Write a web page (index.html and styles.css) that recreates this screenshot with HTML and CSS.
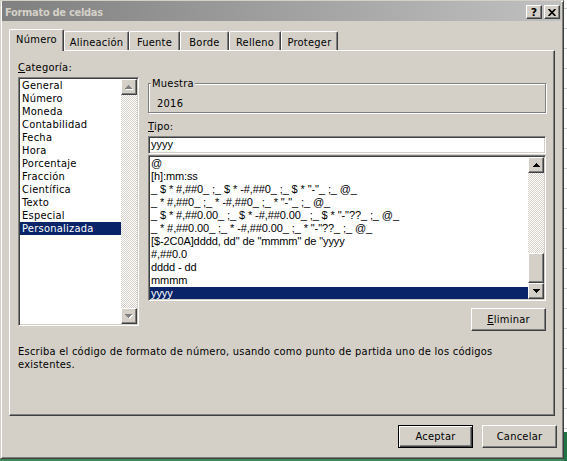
FILE: index.html
```html
<!DOCTYPE html>
<html lang="es">
<head>
<meta charset="utf-8">
<title>Formato de celdas</title>
<link rel="stylesheet" href="styles.css">
</head>
<body>
<div class="window">
  <div class="titlebar">
    <span class="title">Formato de celdas</span>
    <div class="title-buttons">
      <div class="tbtn raised">?</div>
      <div class="tbtn raised"><svg width="8" height="7" viewBox="0 0 8 7"><path d="M0.6 0 L7.4 7 M7.4 0 L0.6 7" stroke="#000" stroke-width="1.7" fill="none"/></svg></div>
    </div>
  </div>
  <div class="main">
    <div class="tabs">
      <div class="tab active tab-numero">Número</div>
      <div class="tab tab-alineacion">Alineación</div>
      <div class="tab tab-fuente">Fuente</div>
      <div class="tab tab-borde">Borde</div>
      <div class="tab tab-relleno">Relleno</div>
      <div class="tab tab-proteger">Proteger</div>
    </div>
    <div class="panel">
      <div class="columns">
        <div class="col-left">
          <div class="label"><u>C</u>ategoría:</div>
          <div class="listbox cat-list">
            <div class="items">
              <div class="item">General</div>
              <div class="item">Número</div>
              <div class="item">Moneda</div>
              <div class="item">Contabilidad</div>
              <div class="item">Fecha</div>
              <div class="item">Hora</div>
              <div class="item">Porcentaje</div>
              <div class="item">Fracción</div>
              <div class="item">Científica</div>
              <div class="item">Texto</div>
              <div class="item">Especial</div>
              <div class="item selected">Personalizada</div>
            </div>
            <div class="vscroll">
              <div class="sbtn raised"><svg width="8" height="5" viewBox="0 0 8 5"><path transform="translate(1 1)" fill="#fff" d="M3 0h1v1h1v1h1v1h1v1H0V3h1V2h1V1h1z"/><path fill="#808080" d="M3 0h1v1h1v1h1v1h1v1H0V3h1V2h1V1h1z"/></svg></div>
              <div class="track"></div>
              <div class="sbtn raised"><svg width="8" height="5" viewBox="0 0 8 5"><path transform="translate(1 1)" fill="#fff" d="M0 0h7v1H6v1H5v1H4v1H3V3H2V2H1V1H0z"/><path fill="#808080" d="M0 0h7v1H6v1H5v1H4v1H3V3H2V2H1V1H0z"/></svg></div>
            </div>
          </div>
        </div>
        <div class="col-right">
          <div class="group">
            <div class="legend">Muestra</div>
            <div class="sample">2016</div>
          </div>
          <div class="label tipo-label"><u>T</u>ipo:</div>
          <div class="field">yyyy</div>
          <div class="listbox fmt-list">
            <div class="items">
              <div class="item">@</div>
              <div class="item">[h]:mm:ss</div>
              <div class="item">_ $ * #,##0_ ;_ $ * -#,##0_ ;_ $ * "-"_ ;_ @_</div>
              <div class="item">_ * #,##0_ ;_ * -#,##0_ ;_ * "-"_ ;_ @_</div>
              <div class="item">_ $ * #,##0.00_ ;_ $ * -#,##0.00_ ;_ $ * "-"??_ ;_ @_</div>
              <div class="item">_ * #,##0.00_ ;_ * -#,##0.00_ ;_ * "-"??_ ;_ @_</div>
              <div class="item">[$-2C0A]dddd, dd" de "mmmm" de "yyyy</div>
              <div class="item">#,##0.0</div>
              <div class="item">dddd - dd</div>
              <div class="item">mmmm</div>
              <div class="item selected">yyyy</div>
            </div>
            <div class="vscroll">
              <div class="sbtn raised"><svg width="7" height="4" viewBox="0 0 7 4"><path fill="#000" d="M3 0h1v1h1v1h1v1h1v1H0V3h1V2h1V1h1z"/></svg></div>
              <div class="track"></div>
              <div class="thumb raised"></div>
              <div class="sbtn raised"><svg width="7" height="4" viewBox="0 0 7 4"><path fill="#000" d="M0 0h7v1H6v1H5v1H4v1H3V3H2V2H1V1H0z"/></svg></div>
            </div>
          </div>
          <div class="actions-right">
            <button class="btn" type="button"><u>E</u>liminar</button>
          </div>
        </div>
      </div>
      <p class="desc">Escriba el código de formato de número, usando como punto de partida uno de los códigos<br>existentes.</p>
    </div>
    <div class="footer">
      <button class="btn default" type="button">Aceptar</button>
      <button class="btn" type="button">Cancelar</button>
    </div>
  </div>
</div>
</body>
</html>
```

FILE: styles.css
```css
* { box-sizing: border-box; }
html, body { margin: 0; padding: 0; }
body {
  width: 567px;
  height: 461px;
  overflow: hidden;
  font-family: "DejaVu Sans Condensed", "DejaVu Sans", sans-serif;
  font-stretch: condensed;
  font-size: 11px;
  line-height: 13px;
  letter-spacing: 0.25px;
  color: #000;
  background:
    linear-gradient(#217346, #217346) right bottom / 3px 29px no-repeat,
    linear-gradient(#3d8a5c, #3d8a5c) left bottom / 100% 2px no-repeat,
    repeating-linear-gradient(to bottom, #fff 0 8px, #d0d0d0 8px 9px, #fff 9px 20px);
}

.window {
  width: 564px;
  height: 459px;
  background: #d4d0c8;
  border: 1px solid;
  border-color: #d4d0c8 #404040 #404040 #d4d0c8;
  box-shadow: inset 1px 1px #fff, inset -1px -1px #808080;
  padding: 0 2px 0 1px;
}

.raised {
  background: #d4d0c8;
  border: 1px solid;
  border-color: #fff #404040 #404040 #fff;
  box-shadow: inset -1px -1px #808080;
}

/* title bar */
.titlebar {
  height: 20px;
  display: flex;
  align-items: flex-end;
  justify-content: space-between;
  padding: 0 1px 2px 3px;
  background: linear-gradient(to right, #808080, #c0c0c0);
}
.title {
  font-weight: bold;
  color: #d4d0c8;
  line-height: 13px;
  letter-spacing: -0.3px;
}
.title-buttons { display: flex; gap: 2px; }
.tbtn {
  width: 16px;
  height: 14px;
  display: flex;
  align-items: center;
  justify-content: center;
  font-family: "DejaVu Sans", sans-serif;
  font-stretch: normal;
  font-weight: bold;
  font-size: 11px;
  line-height: 1;
  letter-spacing: 0;
}

/* main area */
.main { padding: 8px 0 0 7px; }

.tabs {
  display: flex;
  align-items: flex-end;
  height: 21px;
}
.tab {
  height: 19px;
  padding-top: 4px;
  text-align: center;
  border: 1px solid;
  border-bottom: 0;
  border-color: #fff #404040 #404040 #fff;
  border-radius: 2px 2px 0 0;
  box-shadow: inset -1px 0 #808080;
  background: #d4d0c8;
}
.tab.active {
  height: 22px;
  padding-top: 3px;
  margin-bottom: -1px;
  position: relative;
  z-index: 1;
}
.tab-numero { width: 55px; }
.tab-alineacion { width: 65px; }
.tab-fuente { width: 51px; }
.tab-borde { width: 49px; }
.tab-relleno { width: 52px; }
.tab-proteger { width: 57px; }

.panel {
  width: 546px;
  height: 366px;
  border: 1px solid;
  border-color: #fff #404040 #404040 #fff;
  box-shadow: inset -1px -1px #808080;
  padding: 10px 8px 0 8px;
}

.columns {
  display: grid;
  grid-template-columns: 121px 398px;
  column-gap: 9px;
  align-items: start;
}

.label { line-height: 13px; }

.listbox {
  display: flex;
  background: #fff;
  border: 1px solid;
  border-color: #808080 #fff #fff #808080;
  box-shadow: inset 1px 1px #404040, inset -1px -1px #d4d0c8;
  padding: 1px;
}
.items {
  flex: 1;
  overflow: hidden;
  min-width: 0;
}
.item { line-height: 13px; white-space: pre; }
.item.selected { background: #0a246a; color: #fff; }

.cat-list { margin-top: 3px; height: 249px; }
.cat-list .item { padding-left: 2px; }

.vscroll {
  width: 16px;
  flex: none;
  display: flex;
  flex-direction: column;
}
.sbtn {
  height: 16px;
  flex: none;
  display: flex;
  align-items: center;
  justify-content: center;
}
.track {
  flex: 1;
  background: repeating-conic-gradient(#fff 0 25%, #d4d0c8 0 50%) 0 0 / 2px 2px;
}
.thumb { height: 30px; flex: none; }

/* right column */
.group {
  height: 30px;
  margin-top: 22px;
  border: 1px solid #808080;
  box-shadow: inset 1px 1px #fff, 1px 1px #fff;
}
.legend {
  width: fit-content;
  margin: -7px 0 0 2px;
  padding: 0 1px;
  background: #d4d0c8;
  line-height: 13px;
}
.sample {
  margin-top: 7px;
  padding-left: 8px;
  line-height: 13px;
}
.tipo-label { margin-top: 7px; }

.field {
  height: 18px;
  margin-top: 3px;
  background: #fff;
  border: 1px solid;
  border-color: #808080 #fff #fff #808080;
  box-shadow: inset 1px 1px #404040, inset -1px -1px #d4d0c8;
  padding: 1px 2px 0 2px;
  font-family: "Liberation Sans", Arial, sans-serif;
  font-stretch: normal;
  letter-spacing: 0;
  line-height: 12px;
}

.fmt-list { margin-top: 1px; height: 146px; }
.fmt-list .items {
  font-family: "Liberation Sans", Arial, sans-serif;
  font-stretch: normal;
  letter-spacing: -0.1px;
}
.fmt-list .item { padding-left: 1px; }

.actions-right {
  display: flex;
  justify-content: flex-end;
  margin-top: 7px;
}

.btn {
  width: 75px;
  height: 23px;
  padding: 0;
  font: inherit;
  letter-spacing: inherit;
  color: #000;
  background: #d4d0c8;
  border: 1px solid;
  border-color: #fff #404040 #404040 #fff;
  box-shadow: inset -1px -1px #808080;
  -webkit-appearance: none;
  appearance: none;
}
.btn.default {
  border-color: #000;
  box-shadow: inset 1px 1px #fff, inset -1px -1px #404040, inset -2px -2px #808080;
}

.desc {
  margin: 14px 0 0 0;
  line-height: 13px;
}

.footer {
  display: flex;
  justify-content: flex-end;
  gap: 9px;
  margin-top: 9px;
  padding-right: 4px;
}
```
